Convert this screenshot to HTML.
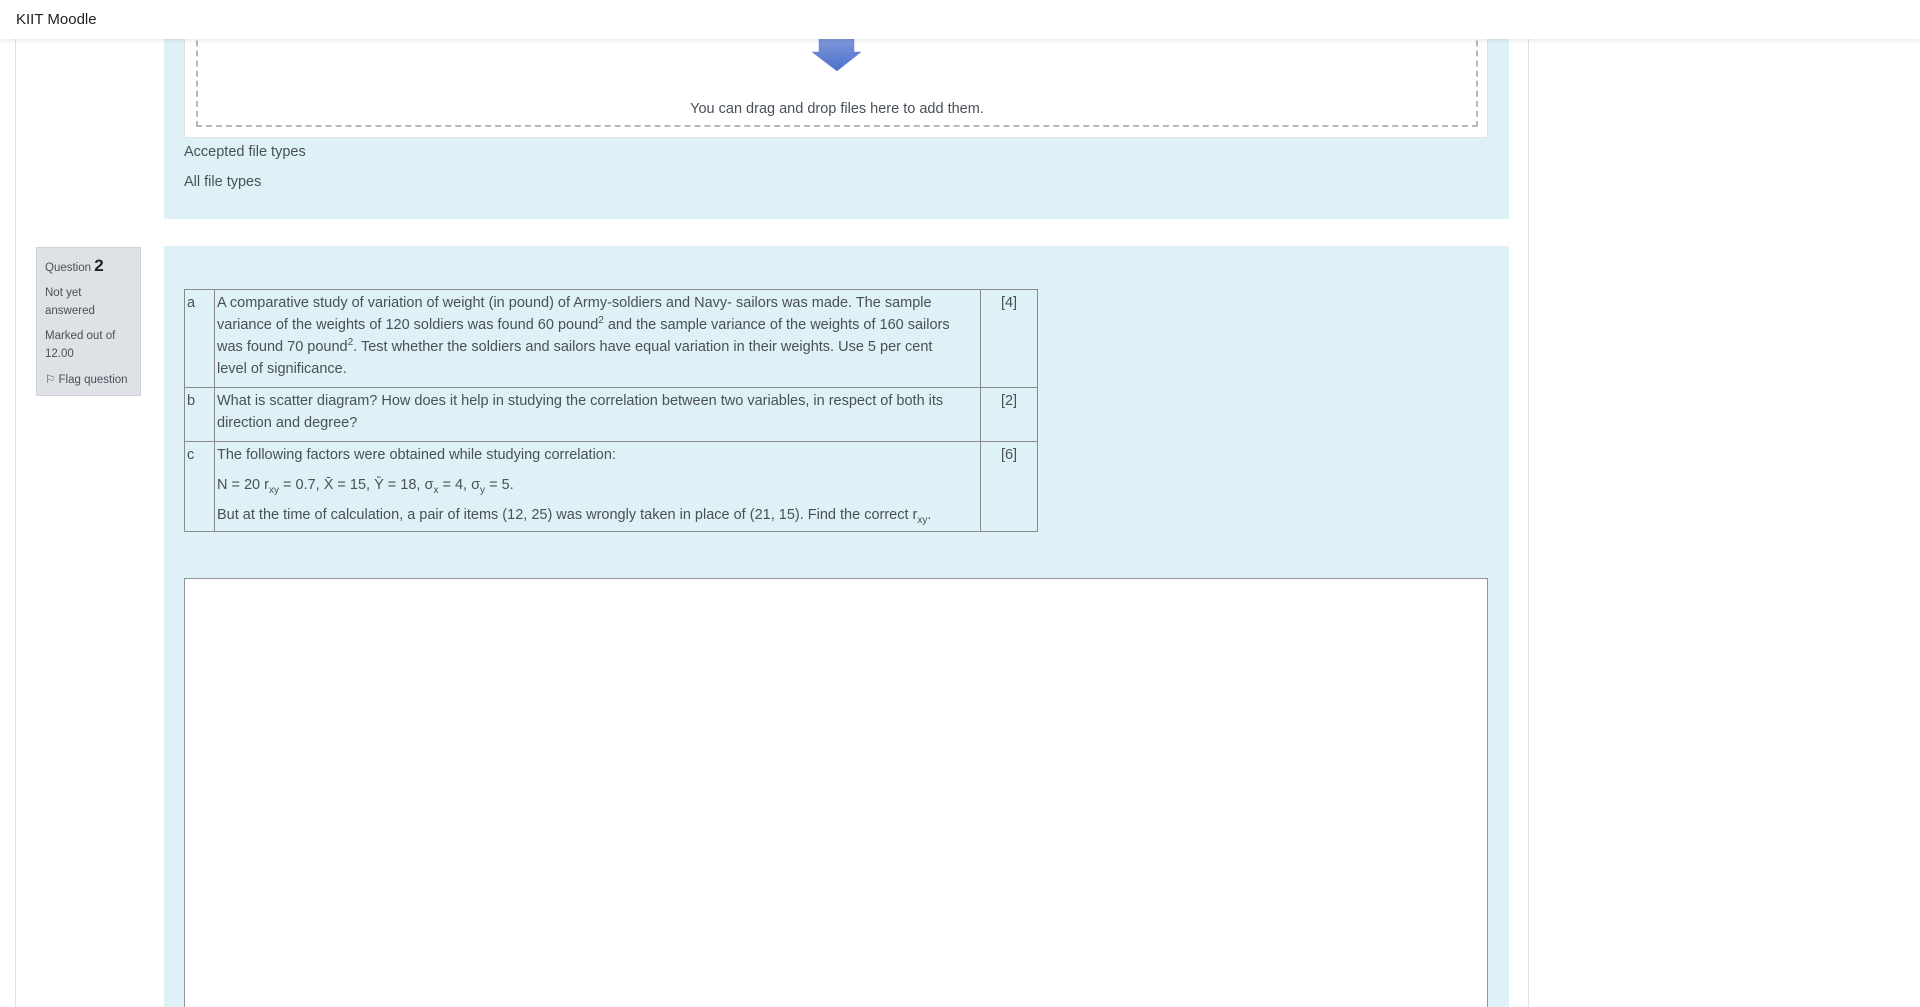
<!DOCTYPE html>
<html style="overflow:hidden;height:1007px"><head><meta charset="utf-8"><style>
*{box-sizing:border-box;margin:0;padding:0}
body{width:1920px;height:1007px;overflow:hidden;background:#fff;font-family:"Liberation Sans",sans-serif;color:#495057;position:relative}
.abs{position:absolute}
#hdr{left:0;top:0;width:1920px;height:39px;background:#fff;box-shadow:0 2px 4px rgba(0,0,0,.08);z-index:5;font-size:15px;color:#1d2125}
.blue{background:#def1f7}
td{border:1px solid #8a8a8a;vertical-align:top;font-size:14.5px;line-height:22px;padding:2px 2px 0;color:#495057}
table{border-collapse:collapse;position:absolute;left:184px;top:289px;width:854px}
sub,sup{font-size:10px;line-height:0}
</style></head><body>
<div id="hdr" class="abs"><span class="abs" style="left:16px;top:11px">KIIT Moodle</span></div>
<div class="abs" style="left:15px;top:0;width:1px;height:1007px;background:#dee2e6"></div>
<div class="abs" style="left:1528px;top:0;width:1px;height:1007px;background:#dee2e6"></div>

<div class="abs blue" style="left:164px;top:0;width:1345px;height:219px"></div>
<div class="abs" style="left:184px;top:0;width:1304px;height:138px;background:#fff;border:1px solid #dee2e6"></div>
<div class="abs" style="left:196px;top:0;width:1282px;height:127px;border:2px dashed #b8b8b8;border-top:none"></div>
<svg class="abs" style="left:805px;top:30px" width="64" height="50"><defs><linearGradient id="g" x1="0" y1="0" x2="0" y2="1"><stop offset="0" stop-color="#8aa3dd"/><stop offset="1" stop-color="#4d6fcc"/></linearGradient></defs><path d="M14 0H49V22H56L32 41L7 22H14Z" fill="url(#g)" stroke="#6b86cf" stroke-width=".5"/></svg>
<div class="abs" style="left:196px;width:1282px;top:101px;text-align:center;font-size:14.5px">You can drag and drop files here to add them.</div>
<div class="abs" style="left:184px;top:144px;font-size:14.5px">Accepted file types</div>
<div class="abs" style="left:184px;top:174px;font-size:14.5px">All file types</div>

<div class="abs" style="left:36px;top:247px;width:105px;height:149px;background:#dee2e6;border:1px solid #ced4da;font-size:11.5px;padding:0 8px;color:#495057">
<div style="position:absolute;left:8px;top:8px">Question <b style="font-size:17px;color:#1d2125">2</b></div>
<div style="position:absolute;left:8px;top:36px;line-height:18px">Not yet<br>answered</div>
<div style="position:absolute;left:8px;top:79px;line-height:18px">Marked out of<br>12.00</div>
<div style="position:absolute;left:8px;top:124px">⚐ Flag question</div>
</div>

<div class="abs blue" style="left:164px;top:246px;width:1345px;height:761px"></div>
<table>
<tr style="height:98px"><td style="width:30px">a</td><td style="width:766px">A comparative study of variation of weight (in pound) of Army-soldiers and Navy- sailors was made. The sample<br>variance of the weights of 120 soldiers was found 60 pound<sup>2</sup> and the sample variance of the weights of 160 sailors<br>was found 70 pound<sup>2</sup>. Test whether the soldiers and sailors have equal variation in their weights. Use 5 per cent<br>level of significance.</td><td style="text-align:center">[4]</td></tr>
<tr style="height:54px"><td>b</td><td>What is scatter diagram? How does it help in studying the correlation between two variables, in respect of both its<br>direction and degree?</td><td style="text-align:center">[2]</td></tr>
<tr style="height:90px"><td>c</td><td><div style="margin-bottom:8px">The following factors were obtained while studying correlation:</div><div style="margin-bottom:8px">N = 20 r<sub>xy</sub> = 0.7, X̄ = 15, Ȳ = 18, σ<sub>x</sub> = 4, σ<sub>y</sub> = 5.</div><div>But at the time of calculation, a pair of items (12, 25) was wrongly taken in place of (21, 15). Find the correct r<sub>xy</sub>.</div></td><td style="text-align:center">[6]</td></tr>
</table>
<div class="abs" style="left:184px;top:578px;width:1304px;height:429px;background:#fff;border:1px solid #8f959e;border-bottom:none"></div>
</body></html>
